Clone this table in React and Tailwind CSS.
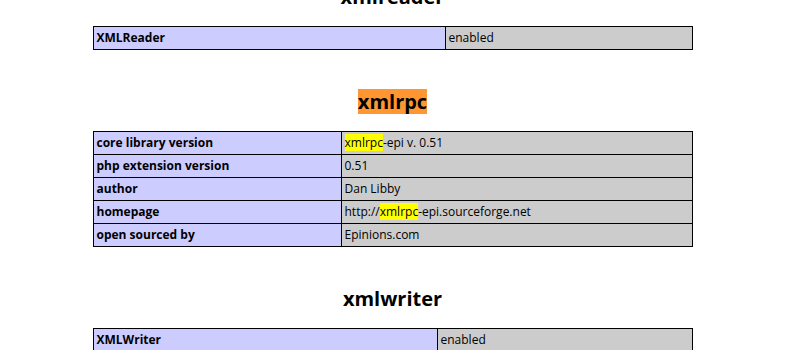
import React from 'react'

const font = "font-['Open_Sans','Liberation_Sans',sans-serif]"

const Hit = ({ children }) => <span className="bg-[#ffff00]">{children}</span>

const Heading = ({ children, className = '' }) => (
  <h2 className={`text-center text-[20px] font-bold leading-[25px] text-black ${className}`}>{children}</h2>
)

const InfoTable = ({ rows, split, className = '' }) => (
  <table className={`w-[600px] table-fixed border-collapse text-[12px] text-black ${className}`}>
    <colgroup>
      <col style={{ width: split }} />
      <col />
    </colgroup>
    <tbody>
      {rows.map(([k, v], i) => (
        <tr key={i} className="h-[23px]">
          <td className="border border-black bg-[#ccccff] px-[3px] py-0 font-bold whitespace-nowrap">{k}</td>
          <td className="border border-black bg-[#cccccc] px-[3px] py-0 whitespace-nowrap">{v}</td>
        </tr>
      ))}
    </tbody>
  </table>
)

export default function App() {
  return (
    <div className={`w-[785px] h-[350px] overflow-hidden bg-white ${font}`}>
      <div className="flex flex-col items-center">
        <Heading className="mt-[-16px]">xmlreader</Heading>
        <InfoTable className="mt-[17px]" split="352px" rows={[['XMLReader', 'enabled']]} />

        <Heading className="mt-[39px]">
          <span className="inline-block bg-[#ff9632]">xmlrpc</span>
        </Heading>
        <InfoTable
          className="mt-[17px]"
          split="248px"
          rows={[
            ['core library version', <><Hit>xmlrpc</Hit>-epi v. 0.51</>],
            ['php extension version', '0.51'],
            ['author', 'Dan Libby'],
            ['homepage', <>http://<Hit>xmlrpc</Hit>-epi.sourceforge.net</>],
            ['open sourced by', 'Epinions.com'],
          ]}
        />

        <Heading className="mt-[39px]">xmlwriter</Heading>
        <InfoTable className="mt-[17px]" split="344px" rows={[['XMLWriter', 'enabled']]} />
      </div>
    </div>
  )
}
